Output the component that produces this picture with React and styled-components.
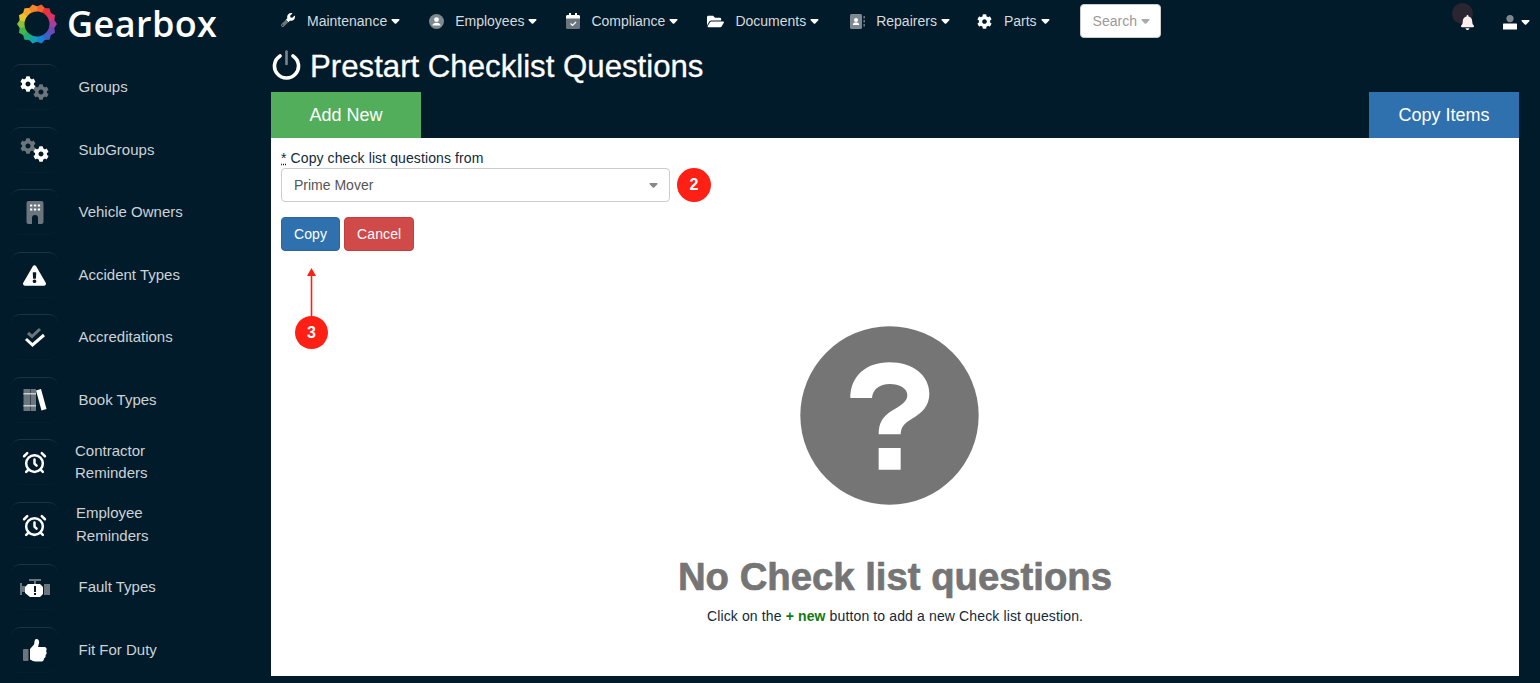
import React from "react";
import styled, { createGlobalStyle } from "styled-components";
import { AlarmClock } from "lucide-react";
import {
  FaCog,
  FaWrench,
  FaFolderOpen,
  FaBell,
  FaExclamationTriangle,
} from "react-icons/fa";

const GlobalStyle = createGlobalStyle`
  html, body {
    margin: 0;
    height: 100%;
    overflow: hidden;
    background: #021b2a;
    font-family: "Liberation Sans", Arial, sans-serif;
  }
`;

const Page = styled.div`
  display: flex;
  width: 1540px;
  height: 683px;
  background: #021b2a;
  overflow: hidden;
`;

const Sidebar = styled.aside`
  width: 271px;
  flex: none;
`;

const Brand = styled.div`
  display: flex;
  align-items: center;
  height: 48px;
  padding: 0 0 0 17px;
  margin-bottom: 16.3px;
`;

const BrandName = styled.span`
  margin-left: 10px;
  font-family: "Open Sans", sans-serif;
  font-weight: 600;
  font-size: 36px;
  letter-spacing: 0.4px;
  color: #fff;
  position: relative;
  top: -1px;
`;

const Menu = styled.ul`
  list-style: none;
  margin: 0;
  padding: 0 0 0 11px;
`;

const MenuItem = styled.li`
  display: flex;
  align-items: center;
  height: 46px;
  margin-bottom: 16.5px;
`;

const IconBox = styled.span`
  width: 47px;
  height: 46px;
  box-sizing: border-box;
  flex: none;
  display: flex;
  justify-content: center;
  align-items: center;
  border-top: 1px solid #1d3341;
  border-radius: 9px;
  box-shadow: inset 0 -1px 0 #04202f;
`;

const MenuLabel = styled.span`
  margin-left: ${(p) => p.$indent}px;
  font-size: 15px;
  line-height: 22.5px;
  width: 120px;
  color: #cdd2d6;
`;

const Main = styled.main`
  flex: 1;
  min-width: 0;
  padding-right: 21px;
`;

const TopNav = styled.nav`
  display: flex;
  align-items: center;
  height: 42px;
  position: relative;
`;

const NavItem = styled.a`
  display: flex;
  align-items: center;
  margin-left: ${(p) => p.$left}px;
  font-size: 14px;
  color: #d6dadd;
`;

const NavIcon = styled.span`
  display: flex;
  width: ${(p) => p.$w}px;
  flex: none;
`;

const Caret = styled.svg.attrs({ width: 9, height: 5, viewBox: "0 0 10 6" })`
  margin-left: ${(p) => p.$gap || 4}px;
  margin-top: 1px;
  fill: ${(p) => p.$color || "#fff"};
`;

const CaretIcon = ({ color, gap }) => (
  <Caret $color={color} $gap={gap}>
    <path d="M1 0h8c.8 0 1.2 1 .6 1.6L5.6 5.6c-.3.3-.9.3-1.2 0L.4 1.6C-.2 1 .2 0 1 0z" />
  </Caret>
);

const SearchButton = styled.button`
  display: flex;
  align-items: center;
  height: 34px;
  width: 81px;
  margin-left: 30px;
  padding: 0 0 0 12px;
  background: #fff;
  border: 1px solid #ccc;
  border-radius: 4px;
  font: 14px "Liberation Sans", sans-serif;
  color: #9a9a9a;
`;

const TopRight = styled.div`
  display: flex;
  align-items: center;
  margin-left: auto;
  margin-right: -11px;
  padding-top: 2px;
`;

const BellWrap = styled.span`
  display: flex;
  position: relative;
  margin-right: 28px;
`;

const BellDot = styled.span`
  position: absolute;
  left: -8px;
  top: -12px;
  width: 21px;
  height: 21px;
  border-radius: 50%;
  background: #2a2530;
`;

const BellGlyph = styled(FaBell)`
  position: relative;
  color: #fdeeee;
`;

const Title = styled.h1`
  display: flex;
  align-items: center;
  height: 50px;
  margin: 0;
  font-size: 31.2px;
  font-weight: 400;
  color: #fff;
  -webkit-text-stroke: 0.3px #fff;
`;

const TitleIcon = styled.span`
  display: flex;
  margin: -4px 9px 0 1px;
`;

const Tabs = styled.div`
  display: flex;
  justify-content: space-between;
  height: 46px;
`;

const Tab = styled.button`
  width: 150px;
  height: 46px;
  border: 0;
  padding: 0;
  font: 18px "Liberation Sans", sans-serif;
  color: #fff;
  background: ${(p) => p.$bg};
`;

const Panel = styled.section`
  height: 538px;
  padding: 12px 10px 0;
  box-sizing: border-box;
  background: #fff;
  position: relative;
`;

const FieldLabel = styled.label`
  display: block;
  font-size: 14px;
  line-height: 16px;
  letter-spacing: 0.1px;
  color: #12293a;

  & > u {
    text-decoration: underline dotted;
  }
`;

const FieldRow = styled.div`
  display: flex;
  align-items: center;
  margin-top: 2px;
`;

const SelectBox = styled.div`
  display: flex;
  align-items: center;
  justify-content: space-between;
  width: 389px;
  height: 34px;
  box-sizing: border-box;
  padding: 0 11px 0 12px;
  border: 1px solid #ccc;
  border-radius: 4px;
  font-size: 14px;
  color: #555;
`;

const Marker = styled.span`
  display: flex;
  align-items: center;
  justify-content: center;
  width: ${(p) => p.$size}px;
  height: ${(p) => p.$size}px;
  flex: none;
  margin-left: ${(p) => p.$left || 0}px;
  border-radius: 50%;
  background: #ff2015;
  color: #fff;
  font-weight: 700;
  font-size: 16px;
`;

const Actions = styled.div`
  display: flex;
  gap: 4px;
  margin-top: 15px;
`;

const ActionButton = styled.button`
  height: 34px;
  padding: 0 12px;
  border: 1px solid ${(p) => p.$border};
  border-radius: 4px;
  background: ${(p) => p.$bg};
  color: #fff;
  font: 14px "Liberation Sans", sans-serif;
  letter-spacing: 0.1px;
`;

const Annotation = styled.div`
  position: absolute;
  left: 24px;
  top: 130px;
  display: flex;
  flex-direction: column;
  align-items: center;
`;

const EmptyState = styled.div`
  display: flex;
  flex-direction: column;
  align-items: center;
  margin-top: 75px;
`;

const EmptyIcon = styled.svg`
  display: block;
  margin-left: -11px;
`;

const EmptyTitle = styled.h2`
  margin: 47px 0 0;
  font-size: 38.3px;
  line-height: 50px;
  font-weight: 700;
  color: #757575;
  -webkit-text-stroke: 0.7px #757575;
`;

const EmptyText = styled.p`
  margin: 4px 0 0;
  font-size: 14px;
  line-height: 20px;
  letter-spacing: 0.13px;
  color: #12293a;

  & > b {
    color: #137a13;
  }
`;

const GRAY = "#6a757d";

const logoColors = [
  "#f4622f", "#ee2f3c", "#d83468", "#a5409f", "#6f4ab4", "#3f60c6", "#1583d6",
  "#14a0b4", "#22ac78", "#45b548", "#8cc03a", "#e8c62a", "#f6a82a", "#f5852d",
];

const Logo = () => {
  const n = logoColors.length;
  return (
    <svg width="40" height="40" viewBox="-20 -20 40 40">
      {logoColors.map((c, i) => {
        const a0 = ((i - 0.5) * 2 * Math.PI) / n - Math.PI / 2 + 0.2;
        const a1 = ((i + 0.5) * 2 * Math.PI) / n - Math.PI / 2 + 0.25;
        const am = (a0 + a1) / 2;
        return (
          <path
            key={c}
            d={`M0 0L${17.6 * Math.cos(a0)} ${17.6 * Math.sin(a0)}L${20 * Math.cos(am)} ${20 * Math.sin(am)}L${17.6 * Math.cos(a1)} ${17.6 * Math.sin(a1)}Z`}
            fill={c}
          />
        );
      })}
      <circle r="12.5" fill="#021b2a" />
    </svg>
  );
};

const Gears = ({ flip }) => (
  <svg width="30" height="24" viewBox="0 0 30 24">
    <FaCog x="0" y="0" width="15" height="15" fill={flip ? GRAY : "#fff"} />
    <FaCog x="13" y="8" width="16" height="16" fill={flip ? "#fff" : GRAY} />
  </svg>
);

const Building = () => (
  <svg width="18" height="23" viewBox="0 0 18 23">
    <rect x="0.5" width="17" height="23" rx="2" fill={GRAY} />
    {[4, 7.9, 11.8].map((x) =>
      [3.5, 7.5].map((y) => <rect key={x + "-" + y} x={x} y={y} width="2.3" height="2" fill="#fff" />)
    )}
    <path d="M6 23v-6a3 3 0 0 1 6 0v6z" fill="#021b2a" />
  </svg>
);

const DoubleCheck = () => (
  <svg width="22" height="21" viewBox="0 0 22 21" fill="none" strokeWidth="3">
    <path d="M4 6l4 3.5L16 2" stroke={GRAY} />
    <path d="M2 12l6.5 6L20 8" stroke="#fff" />
  </svg>
);

const Books = () => (
  <svg width="24" height="24" viewBox="0 0 24 24">
    <rect x="0.5" y="1" width="6.5" height="22" fill={GRAY} />
    <rect x="7.5" y="1" width="5.5" height="22" fill={GRAY} />
    <rect x="0.5" y="5" width="12.5" height="1.5" fill="#ccc" />
    <rect x="0.5" y="17" width="12.5" height="1.5" fill="#ccc" />
    <path d="M13 2.5l5-1.5 5.5 20-5 1.6z" fill="#fff" />
  </svg>
);

const Engine = () => (
  <svg width="30" height="20" viewBox="0 0 30 20">
    <path d="M0 5h2v3h3v6H2v3H0zM24 6h6v11h-6zM9 1h12v2h-5v3h-2V3H9z" fill={GRAY} />
    <path d="M8 6h12l3 3v7l-3 3H10l-5-4V9z" fill="#fff" />
    <rect x="14" y="8" width="2" height="6" fill="#021b2a" />
    <rect x="14" y="15" width="2" height="2" fill="#021b2a" />
  </svg>
);

const Thumb = () => (
  <svg width="24" height="24" viewBox="0 0 24 24">
    <rect x="0" y="11" width="5.5" height="12" rx="1" fill={GRAY} />
    <path
      d="M7 11L11 6.5C11.8 4.5 11 2 13 1C15.5.5 16.8 3 15.8 6L15 9H21.5C23.5 9 24.3 12 23 13C24.2 15 23.5 16.4 22.5 17C23 19 22.2 20 21 20.5C21 23 19.5 23.5 18 23.5H12.5C10 23.5 8.5 22 7 21.5Z"
      fill="#fff"
    />
  </svg>
);

const Wrench = () => (
  <svg width="16" height="16" viewBox="0 0 16 16">
    <defs>
      <linearGradient id="wrenchTone" x1="0" y1="1" x2="1" y2="0">
        <stop offset="0.45" stopColor={GRAY} />
        <stop offset="0.45" stopColor="#fff" />
      </linearGradient>
    </defs>
    <FaWrench width="16" height="16" fill="url(#wrenchTone)" />
  </svg>
);

const Employee = () => (
  <svg width="15" height="15" viewBox="0 0 15 15">
    <circle cx="7.5" cy="7.5" r="7.5" fill="#7e888f" />
    <circle cx="7.5" cy="5.6" r="2.4" fill="#fff" />
    <path d="M3.5 11.5c0-2 1.6-2.8 4-2.8s4 .8 4 2.8z" fill="#fff" />
  </svg>
);

const CalendarCheck = () => (
  <svg width="14" height="16" viewBox="0 0 14 16">
    <rect y="2" width="14" height="14" rx="1.5" fill={GRAY} />
    <path d="M0 3.5A1.5 1.5 0 0 1 1.5 2H12.5A1.5 1.5 0 0 1 14 3.5V5.5H0z" fill="#fff" />
    <rect x="3" width="2" height="3" fill="#fff" />
    <rect x="9" width="2" height="3" fill="#fff" />
    <path d="M4.5 10.5l2 2 3.5-3.5" stroke="#fff" fill="none" strokeWidth="1.2" />
  </svg>
);

const AddressBook = () => (
  <svg width="15" height="15" viewBox="0 0 15 15">
    <rect width="12" height="15" rx="1.5" fill="#7e888f" />
    <circle cx="6" cy="6" r="2" fill="#fff" />
    <path d="M2.8 11c0-1.8 1.4-2.4 3.2-2.4s3.2.6 3.2 2.4z" fill="#fff" />
    <rect x="13.5" y="2" width="1.3" height="2.5" fill="#7e888f" />
    <rect x="13.5" y="6" width="1.3" height="2.5" fill="#7e888f" />
    <rect x="13.5" y="10" width="1.3" height="2.5" fill="#7e888f" />
  </svg>
);

const UserIcon = () => (
  <svg width="14" height="15" viewBox="0 0 14 15">
    <circle cx="7" cy="3.6" r="3.6" fill="#7e888f" />
    <path d="M1.5 8.5h11A1.5 1.5 0 0 1 14 11v3.5H0V11a1.5 1.5 0 0 1 1.5-2.5z" fill="#fff" />
  </svg>
);

const PowerIcon = () => (
  <svg width="29" height="30" viewBox="0 0 29 30" fill="none" strokeLinecap="round">
    <path d="M8 5.9a12 12 0 1 0 13 0" stroke="#fff" strokeWidth="3.6" />
    <path d="M14.5 1.5V14" stroke="#7a858c" strokeWidth="2.6" />
  </svg>
);

const QuestionIcon = () => (
  <EmptyIcon width="179" height="179" viewBox="30 15 535 537">
    <circle cx="297.5" cy="283.5" r="267.5" fill="#757575" />
    <path
      d="M180 231C180 165 228 124 297 124C367 124 417 163 417 218C417 255 395 275 365 293C342 307 332 317 331 340H265C265 305 277 287 307 268C332 252 351 243 351 222C351 203 328 189 298 189C268 189 247 205 245 231ZM265 381H331V446H265Z"
      fill="#fff"
    />
  </EmptyIcon>
);

const menu = [
  { label: "Groups", icon: <Gears /> },
  { label: "SubGroups", icon: <Gears flip /> },
  { label: "Vehicle Owners", icon: <Building /> },
  { label: "Accident Types", icon: <FaExclamationTriangle size={23} color="#fff" /> },
  { label: "Accreditations", icon: <DoubleCheck /> },
  { label: "Book Types", icon: <Books /> },
  { label: "Contractor Reminders", icon: <AlarmClock size={25} color="#fff" strokeWidth={2.4} />, indent: 17 },
  { label: "Employee Reminders", icon: <AlarmClock size={25} color="#fff" strokeWidth={2.4} />, indent: 18 },
  { label: "Fault Types", icon: <Engine /> },
  { label: "Fit For Duty", icon: <Thumb /> },
];

const nav = [
  { label: "Maintenance", icon: <Wrench />, left: 10, w: 26 },
  { label: "Employees", icon: <Employee />, left: 29, w: 26 },
  { label: "Compliance", icon: <CalendarCheck />, left: 29, w: 25 },
  { label: "Documents", icon: <FaFolderOpen size={17} color="#fff" />, left: 29, w: 28 },
  { label: "Repairers", icon: <AddressBook />, left: 31, w: 26 },
  { label: "Parts", icon: <FaCog size={15} color="#fff" />, left: 27, w: 27 },
];

const App = () => (
  <Page>
    <GlobalStyle />
    <Sidebar>
      <Brand>
        <Logo />
        <BrandName>Gearbox</BrandName>
      </Brand>
      <Menu>
        {menu.map((m) => (
          <MenuItem key={m.label}>
            <IconBox>{m.icon}</IconBox>
            <MenuLabel $indent={m.indent || 20.5}>{m.label}</MenuLabel>
          </MenuItem>
        ))}
      </Menu>
    </Sidebar>
    <Main>
      <TopNav>
        {nav.map((n) => (
          <NavItem key={n.label} $left={n.left}>
            <NavIcon $w={n.w}>{n.icon}</NavIcon>
            {n.label}
            <CaretIcon />
          </NavItem>
        ))}
        <SearchButton>
          Search
          <CaretIcon color="#aaa" />
        </SearchButton>
        <TopRight>
          <BellWrap>
            <BellDot />
            <BellGlyph size={15} />
          </BellWrap>
          <UserIcon />
          <CaretIcon gap={4} />
        </TopRight>
      </TopNav>
      <Title>
        <TitleIcon>
          <PowerIcon />
        </TitleIcon>
        Prestart Checklist Questions
      </Title>
      <Tabs>
        <Tab $bg="#52ae5a">Add New</Tab>
        <Tab $bg="#2f71ae">Copy Items</Tab>
      </Tabs>
      <Panel>
        <FieldLabel>
          <u>*</u> Copy check list questions from
        </FieldLabel>
        <FieldRow>
          <SelectBox>
            Prime Mover
            <CaretIcon color="#888" />
          </SelectBox>
          <Marker $size={34} $left={7}>2</Marker>
        </FieldRow>
        <Actions>
          <ActionButton $bg="#2f71ae" $border="#2a659c">Copy</ActionButton>
          <ActionButton $bg="#d04a4a" $border="#c43e3e">Cancel</ActionButton>
        </Actions>
        <Annotation>
          <svg width="10" height="48" viewBox="0 0 10 48">
            <path d="M4.5 0l4.5 8h-9z" fill="#ff2015" />
            <rect x="3.7" y="6" width="1.6" height="42" fill="#ff2015" />
          </svg>
          <Marker $size={33}>3</Marker>
        </Annotation>
        <EmptyState>
          <QuestionIcon />
          <EmptyTitle>No Check list questions</EmptyTitle>
          <EmptyText>
            Click on the <b>+ new</b> button to add a new Check list question.
          </EmptyText>
        </EmptyState>
      </Panel>
    </Main>
  </Page>
);

export default App;
